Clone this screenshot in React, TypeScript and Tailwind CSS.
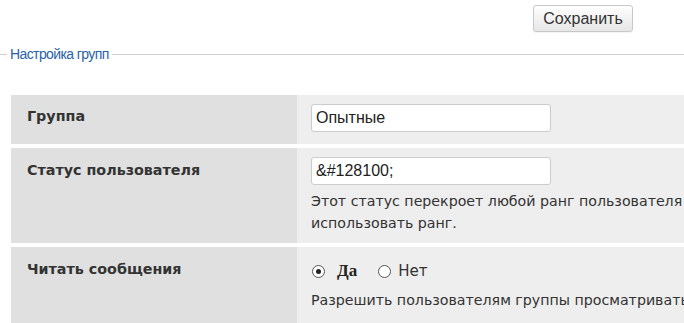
import React from "react";

const App = () => {
  return (
    <div className="w-[684px] h-[323px] overflow-hidden bg-white text-[#333] font-['Liberation_Sans',Arial,sans-serif]">
      {/* Save button */}
      <div className="flex justify-end pr-[51px] pt-[5px]">
        <button className="h-[27px] w-[100px] rounded-[3px] border border-[#c8c8c8] bg-gradient-to-b from-white to-[#e6e6e6] text-[16px] text-[#333] shadow-[0_1px_1px_rgba(0,0,0,0.05)]">
          Сохранить
        </button>
      </div>

      {/* Fieldset legend */}
      <div className="mt-[12px] flex items-center">
        <div className="h-px w-[7px] bg-[#cfcfcf]"></div>
        <span className="px-[3px] text-[14px] leading-[20px] tracking-[-0.6px] text-[#2a62a8]">
          Настройка групп
        </span>
        <div className="h-px flex-1 bg-[#cfcfcf]"></div>
      </div>

      {/* Settings table */}
      <div className="mt-[31px] ml-[11px] flex w-[1000px] flex-col gap-[4px]">
        <div className="flex">
          <div className="w-[286px] shrink-0 bg-[#e0e0e0] px-[16px] pt-[11px] font-['DejaVu_Sans',sans-serif] text-[14.3px] font-bold leading-[20px]">
            Группа
          </div>
          <div className="flex-1 bg-[#eeeeee] px-[14px] pt-[9px] pb-[12px]">
            <input
              className="block h-[28px] w-[240px] rounded-[3px] border border-[#cccccc] bg-white px-[4px] text-[16px] text-[#222] outline-none"
              defaultValue="Опытные"
            />
          </div>
        </div>

        <div className="flex">
          <div className="w-[286px] shrink-0 bg-[#e0e0e0] px-[16px] pt-[12px] font-['DejaVu_Sans',sans-serif] text-[14.3px] font-bold leading-[20px]">
            Статус пользователя
          </div>
          <div className="flex-1 bg-[#eeeeee] px-[14px] pt-[9px] pb-[9px]">
            <input
              className="block h-[28px] w-[240px] rounded-[3px] border border-[#cccccc] bg-white px-[4px] text-[16px] text-[#222] outline-none"
              defaultValue={"&#128100;"}
            />
            <p className="mt-[5px] whitespace-nowrap font-['DejaVu_Sans',sans-serif] text-[14.2px] leading-[22px]">
              Этот статус перекроет любой ранг пользователя если он установлен. Оставьте пустым, чтобы
              <br />
              использовать ранг.
            </p>
          </div>
        </div>

        <div className="flex">
          <div className="w-[286px] shrink-0 bg-[#e0e0e0] px-[16px] pt-[12px] font-['DejaVu_Sans',sans-serif] text-[14.3px] font-bold leading-[20px]">
            Читать сообщения
          </div>
          <div className="flex-1 bg-[#eeeeee] px-[14px] pt-[13px] pb-[12px]">
            <div className="flex items-center font-['DejaVu_Sans',sans-serif] text-[14.2px] leading-[22px]">
              <span className="ml-[1px] flex h-[13px] w-[13px] items-center justify-center rounded-full border border-[#555] bg-white">
                <span className="h-[5px] w-[5px] rounded-full bg-[#222]"></span>
              </span>
              <span className="ml-[12px] font-['Liberation_Serif',serif] text-[17px] font-bold text-[#222]">Да</span>
              <span className="ml-[21px] flex h-[13px] w-[13px] rounded-full border border-[#555] bg-white"></span>
              <span className="ml-[7px] text-[15px]">Нет</span>
            </div>
            <p className="mt-[7px] whitespace-nowrap font-['DejaVu_Sans',sans-serif] text-[14.2px] leading-[22px]">
              Разрешить пользователям группы просматривать сообщения форума.
            </p>
          </div>
        </div>
      </div>
    </div>
  );
};

export default App;
